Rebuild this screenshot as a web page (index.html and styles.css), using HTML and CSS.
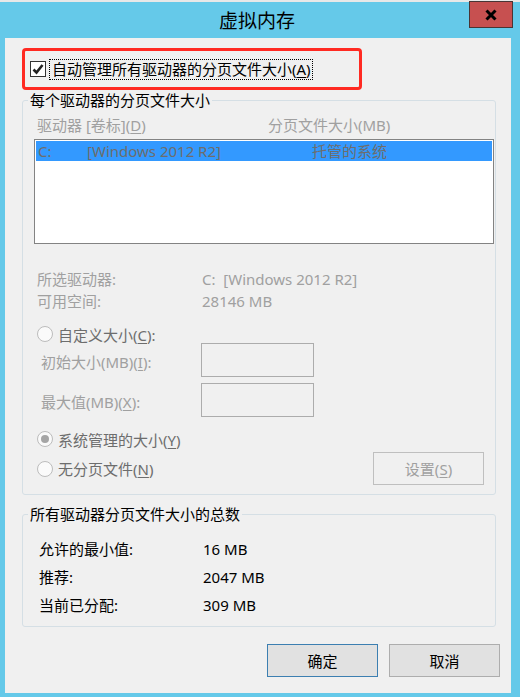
FILE: index.html
```html
<!DOCTYPE html>
<html lang="zh-CN">
<head>
    <meta charset="UTF-8">
    <meta name="viewport" content="width=device-width, initial-scale=1.0">
    <title>虚拟内存</title>
    <link rel="stylesheet" href="styles.css">
</head>
<body>

<div class="window">
    <div class="titlebar">
        <div></div>
        <div class="title">虚拟内存</div>
        <div class="close">
            <svg width="12" height="12" viewBox="0 0 12 12">
                <path d="M1.5 1.5 L10.5 10.5 M10.5 1.5 L1.5 10.5" stroke="#000" stroke-width="3" fill="none"/>
            </svg>
        </div>
    </div>

    <div class="client">
        <div class="auto-box">
            <span class="checkbox">
                <svg width="14" height="14" viewBox="0 0 14 14">
                    <path d="M2.5 7.5 L5.5 10.5 L11.5 3" stroke="#222" stroke-width="2.6" fill="none"/>
                </svg>
            </span>
            <span class="focus">自动管理所有驱动器的分页文件大小(<u>A</u>)</span>
        </div>

        <fieldset class="group per-drive">
            <legend>每个驱动器的分页文件大小</legend>

            <div class="cols">
                <span>驱动器 [卷标](<u>D</u>)</span>
                <span>分页文件大小(MB)</span>
            </div>

            <div class="listbox">
                <div class="list-row selected">
                    <span>C:</span>
                    <span>[Windows 2012 R2]</span>
                    <span>托管的系统</span>
                </div>
            </div>

            <div class="info">
                <span>所选驱动器:</span>
                <span>C:&nbsp; [Windows 2012 R2]</span>
                <span>可用空间:</span>
                <span>28146 MB</span>
            </div>

            <div class="radio-row custom">
                <span class="radio"></span>
                <span>自定义大小(<u>C</u>):</span>
            </div>

            <div class="field-row">
                <span>初始大小(MB)(<u>I</u>):</span>
                <span class="textbox"></span>
            </div>
            <div class="field-row second">
                <span>最大值(MB)(<u>X</u>):</span>
                <span class="textbox"></span>
            </div>

            <div class="radio-row managed">
                <span class="radio checked"></span>
                <span>系统管理的大小(<u>Y</u>)</span>
            </div>

            <div class="last-row">
                <div class="radio-row">
                    <span class="radio"></span>
                    <span>无分页文件(<u>N</u>)</span>
                </div>
                <div class="btn disabled">设置(<u>S</u>)</div>
            </div>
        </fieldset>

        <fieldset class="group totals">
            <legend>所有驱动器分页文件大小的总数</legend>
            <div class="total-grid">
                <span>允许的最小值:</span>
                <span>16 MB</span>
                <span>推荐:</span>
                <span>2047 MB</span>
                <span>当前已分配:</span>
                <span>309 MB</span>
            </div>
        </fieldset>

        <div class="buttons">
            <div class="btn default">确定</div>
            <div class="btn">取消</div>
        </div>
    </div>
</div>

</body>
</html>
```

FILE: styles.css
```css
body {
    margin: 0;
    font-family: "Noto Sans", "Noto Sans CJK SC", sans-serif;
    font-size: 15px;
    color: #000;
    background-color: #65c9e9;
}

.window {
    height: 697px;
    box-sizing: border-box;
    display: flex;
    flex-direction: column;
    border-top: 2px solid #e8e8e8;
}

/* title bar */
.titlebar {
    height: 36px;
    display: grid;
    grid-template-columns: 1fr auto 1fr;
}

.title {
    font-family: "Noto Sans CJK SC", sans-serif;
    font-size: 19px;
    line-height: 36px;
    padding-right: 6px;
}

.close {
    justify-self: end;
    margin-right: 7px;
    width: 42px;
    height: 25px;
    margin-top: -1px;
    background-color: #c75050;
    border: 1px solid #4a3434;
    display: flex;
    align-items: center;
    justify-content: center;
}

/* dialog body */
.client {
    flex: 1;
    margin: 0 9px 4px 5px;
    background-color: #f0f0f0;
    padding: 10px 15px 0 17px;
}

.auto-box {
    height: 36px;
    border: 3px solid #ff2a22;
    border-radius: 4px;
    display: flex;
    align-items: center;
    padding-left: 5px;
    box-sizing: content-box;
    width: 329px;
}

.checkbox {
    width: 14px;
    height: 14px;
    border: 1px solid #333;
    background-color: #fff;
    display: flex;
    align-items: center;
    justify-content: center;
}

.focus {
    margin-left: 3px;
    padding: 0 1px 0 2px;
    border: 1px dotted #000;
    line-height: 19px;
}

u {
    text-decoration-thickness: 1px;
    text-underline-offset: 2px;
}

/* group boxes */
.group {
    margin: 2px 0 0 0;
    border: 1px solid #d5dfe5;
    border-radius: 3px;
    min-inline-size: 0;
}

.group legend {
    margin-left: 5px;
    padding: 0 2px;
    line-height: 16px;
}

.per-drive {
    padding: 7px 0 9px 0;
}

.cols {
    display: grid;
    grid-template-columns: 231px auto;
    padding-left: 14px;
    line-height: 20px;
    color: #a0a0a0;
}

.listbox {
    margin: 4px 1px 0 11px;
    height: 101px;
    border: 1px solid #838383;
    background-color: #fff;
    padding: 1px;
}

.list-row {
    display: grid;
    grid-template-columns: 49px 225px auto;
    padding-left: 2px;
    height: 20px;
    line-height: 20px;
    color: #6d6d6d;
}

.list-row.selected {
    background-color: #3399ff;
}

.info {
    margin-top: 24px;
    display: grid;
    grid-template-columns: 165px auto;
    padding-left: 14px;
    line-height: 22px;
    color: #a0a0a0;
}

.radio-row {
    display: flex;
    align-items: center;
    gap: 5px;
    padding-left: 14px;
    height: 18px;
    color: #6d6d6d;
}

.radio-row.custom {
    margin-top: 13px;
}

.radio-row.managed {
    margin-top: 13px;
}

.radio {
    width: 14px;
    height: 14px;
    border: 1px solid #bcbcbc;
    border-radius: 50%;
    background-color: #fafafa;
    display: flex;
    align-items: center;
    justify-content: center;
}

.radio.checked::after {
    content: "";
    width: 8px;
    height: 8px;
    border-radius: 50%;
    background-color: #a5a5a5;
}

.field-row {
    display: grid;
    grid-template-columns: 160px auto;
    align-items: center;
    padding-left: 18px;
    height: 34px;
    color: #a0a0a0;
}

.field-row span:first-child {
    padding-top: 3px;
}

.field-row.second {
    margin-top: 6px;
}

.textbox {
    width: 111px;
    height: 32px;
    border: 1px solid #acacac;
}

.last-row {
    margin-top: 4px;
    display: flex;
    align-items: center;
    justify-content: space-between;
    padding-right: 11px;
}

/* buttons */
.btn {
    width: 109px;
    height: 31px;
    border: 1px solid #adadad;
    background-color: #e1e1e1;
    display: flex;
    align-items: center;
    justify-content: center;
    line-height: 20px;
}

.btn.disabled {
    background-color: #f0f0f0;
    border-color: #bfbfbf;
    color: #a0a0a0;
}

.btn.default {
    border-color: #3c7fb1;
}

.totals {
    margin-top: 11px;
    padding: 13px 0 7px 0;
}

.total-grid {
    display: grid;
    grid-template-columns: 164px auto;
    padding-left: 16px;
    line-height: 28px;
}

.buttons {
    margin: 17px -4px 0 0;
    display: flex;
    justify-content: flex-end;
    gap: 11px;
}
```
